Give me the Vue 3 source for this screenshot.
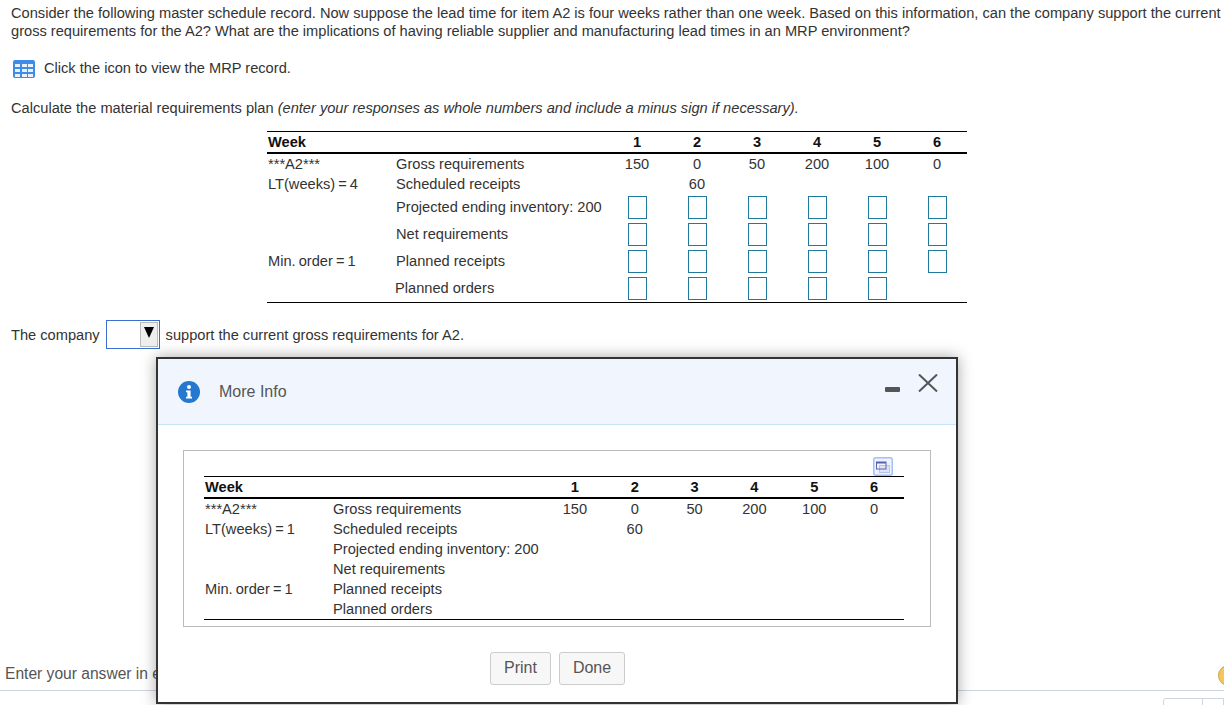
<template>
  <div class="page">
    <div class="content">
      <p class="question">
        Consider the following master schedule record. Now suppose the lead time for item A2 is four weeks rather than one week. Based on this information, can the company support the current gross requirements for the A2? What are the implications of having reliable supplier and manufacturing lead times in an MRP environment?
      </p>

      <div class="icon-line">
        <svg class="grid-icon" width="22" height="18" viewBox="0 0 22 18">
          <rect width="22" height="18" rx="2" fill="#3f8be8" />
          <g fill="#e8f1fc">
            <template v-for="y in [4, 9, 14]" :key="y">
              <rect v-for="x in [2, 9, 15]" :key="x" :x="x" :y="y" width="5" height="3" />
            </template>
          </g>
        </svg>
        <span class="icon-text">Click the icon to view the MRP record.</span>
      </div>

      <p class="calc">
        Calculate the material requirements plan <em>(enter your responses as whole numbers and include a minus sign if necessary).</em>
      </p>

      <table class="mrp answer">
        <thead>
          <tr>
            <th class="c1">Week</th>
            <th class="c2"></th>
            <th v-for="w in weeks" :key="w" class="num">{{ w }}</th>
          </tr>
        </thead>
        <tbody>
          <tr v-for="row in answerRows" :key="row.label" :class="{ inputs: row.inputs }">
            <td class="side">{{ row.side }}</td>
            <td :class="{ nudge: row.label === 'Planned orders' }">{{ row.label }}</td>
            <td v-for="(w, i) in weeks" :key="w" class="num">
              <template v-if="row.values">{{ row.values[i] }}</template>
              <input v-else-if="i < row.inputs" class="cell" type="text" />
            </td>
          </tr>
        </tbody>
      </table>

      <div class="company">
        <span>The company</span>
        <div class="dropdown">
          <span class="arrow-btn"><i class="arrow"></i></span>
        </div>
        <span>support the current gross requirements for A2.</span>
      </div>
    </div>

    <div class="footer">
      <span class="hint">Enter your answer in each of the edit fields.</span>
      <div class="coin"></div>
    </div>
    <div class="footer-tabs"></div>

    <div class="modal">
      <div class="modal-head">
        <svg class="info" width="22" height="22" viewBox="0 0 22 22">
          <circle cx="11" cy="11" r="11" fill="#2478cf" />
          <circle cx="11" cy="6" r="2" fill="#fff" />
          <path d="M8 9.5h4.6v6.2H14V17.500H8v-1.800h1.400v-4.400H8z" fill="#fff" />
        </svg>
        <span class="modal-title">More Info</span>
        <svg class="minus" width="15" height="5" viewBox="0 0 15 5">
          <rect width="15" height="5" rx="1" fill="#555" />
        </svg>
        <svg class="close" width="20" height="18" viewBox="0 0 20 18">
          <path d="M1 0.500L19 17.500M19 0.500L1 17.500" stroke="#555" stroke-width="2" fill="none" />
        </svg>
      </div>

      <div class="modal-body">
        <div class="panel">
          <svg class="expand" width="20" height="19" viewBox="0 0 20 19">
            <rect x="0.750" y="0.750" width="18.500" height="17.500" rx="2" fill="#eef3ff" stroke="#a3c0fb" stroke-width="1.500" />
            <rect x="6.500" y="8.500" width="10" height="7" fill="#dfe4f4" stroke="#bcc4e4" />
            <rect x="3.500" y="5" width="9.500" height="7" fill="none" stroke="#5a62b0" />
            <rect x="3.500" y="5" width="9.500" height="1.500" fill="#5a62b0" />
          </svg>
          <table class="mrp info-table">
            <thead>
              <tr>
                <th class="c1">Week</th>
                <th class="c2"></th>
                <th v-for="w in weeks" :key="w" class="num">{{ w }}</th>
              </tr>
            </thead>
            <tbody>
              <tr v-for="row in infoRows" :key="row.label">
                <td class="side">{{ row.side }}</td>
                <td>{{ row.label }}</td>
                <td v-for="(w, i) in weeks" :key="w" class="num">{{ row.values ? row.values[i] : '' }}</td>
              </tr>
            </tbody>
          </table>
        </div>
        <div class="modal-actions">
          <button type="button">Print</button>
          <button type="button">Done</button>
        </div>
      </div>
    </div>
  </div>
</template>

<script setup>
const weeks = [1, 2, 3, 4, 5, 6]

const gross = [150, 0, 50, 200, 100, 0]
const sched = ['', 60, '', '', '', '']

const answerRows = [
  { side: '***A2***', label: 'Gross requirements', values: gross },
  { side: 'LT(weeks) = 4', label: 'Scheduled receipts', values: sched },
  { side: '', label: 'Projected ending inventory: 200', inputs: 6 },
  { side: '', label: 'Net requirements', inputs: 6 },
  { side: 'Min. order = 1', label: 'Planned receipts', inputs: 6 },
  { side: '', label: 'Planned orders', inputs: 5 }
]

const infoRows = [
  { side: '***A2***', label: 'Gross requirements', values: gross },
  { side: 'LT(weeks) = 1', label: 'Scheduled receipts', values: sched },
  { side: '', label: 'Projected ending inventory: 200' },
  { side: '', label: 'Net requirements' },
  { side: 'Min. order = 1', label: 'Planned receipts' },
  { side: '', label: 'Planned orders' }
]
</script>

<style>
html,
body {
  margin: 0;
  background: #fff;
  overflow: hidden;
}
</style>

<style scoped>
.page {
  position: relative;
  width: 1224px;
  height: 705px;
  overflow: hidden;
  display: flex;
  flex-direction: column;
  font-family: "Liberation Sans", Arial, sans-serif;
  font-size: 14.63px;
  color: #333;
  background: #fff;
}

.content {
  padding: 4px 0 0 11px;
  flex: 1;
}

.question {
  margin: 0;
  width: 1213px;
  line-height: 18px;
}

.icon-line {
  display: flex;
  align-items: center;
  gap: 9px;
  margin: 20px 0 0 2px;
  height: 18px;
}

.icon-text {
  position: relative;
  top: -1px;
}

.calc {
  margin: 21px 0 0;
  line-height: 18px;
}

.mrp {
  border-collapse: collapse;
  table-layout: fixed;
  width: 700px;
  border-top: 1px solid #000;
  border-bottom: 1px solid #000;
}

.mrp th {
  height: 20px;
  padding: 0 0 0 1px;
  text-align: left;
  font-weight: 700;
  color: #111;
  border-bottom: 2px solid #000;
}

.mrp td {
  height: 20px;
  padding: 0 0 0 1px;
}

.mrp .c1 {
  width: 127px;
}

.mrp .c2 {
  width: 211px;
}

.mrp .num {
  width: 60px;
  padding: 0;
  text-align: center;
}

.mrp .side {
  word-spacing: -1px;
}

.info-table .c2 {
  width: 212px;
}

.info-table .num {
  width: 59.83px;
}

.answer {
  margin: 14px 0 0 256px;
}

.answer tr.inputs td {
  height: 27px;
}

.answer tr.inputs td:not(.num) {
  box-sizing: border-box;
  padding-bottom: 2px;
}

.nudge {
  position: relative;
  left: -1px;
}

.cell {
  display: block;
  box-sizing: border-box;
  width: 19px;
  height: 23px;
  margin: 0 auto;
  padding: 0;
  border: 1px solid #1f7a9e;
  background: #fff;
}

.company {
  display: flex;
  align-items: center;
  gap: 6px;
  margin-top: 17px;
  height: 29px;
}

.dropdown {
  box-sizing: border-box;
  width: 54px;
  height: 29px;
  border: 1px solid #3a6fd0;
  display: flex;
  justify-content: flex-end;
  align-items: center;
  padding-right: 1px;
  background: #fff;
}

.arrow-btn {
  box-sizing: border-box;
  width: 18px;
  height: 25px;
  margin-bottom: 1px;
  display: flex;
  justify-content: center;
  padding-top: 4px;
  background: #eee;
  border: 1px solid #bbb;
}

.arrow {
  width: 0;
  height: 0;
  border-left: 5px solid transparent;
  border-right: 5px solid transparent;
  border-top: 11px solid #000;
}

.footer {
  box-sizing: border-box;
  height: 37px;
  display: flex;
  justify-content: space-between;
  padding: 11px 0 0 5px;
  border-bottom: 1px solid #cfd5dc;
  margin-bottom: 14px;
}

.hint {
  font-size: 15.6px;
  color: #555;
  line-height: 18px;
}

.coin {
  flex: none;
  width: 21px;
  height: 21px;
  margin-right: -15px;
  border-radius: 50%;
  background: #f6c659;
  border: 1px solid #c9a24a;
  box-sizing: border-box;
}

.footer-tabs {
  position: absolute;
  left: 1163px;
  top: 698px;
  width: 61px;
  height: 10px;
  box-sizing: border-box;
  border: 1px solid #cfd5dc;
  border-radius: 3px 0 0 0;
  background: linear-gradient(to right, transparent 38px, #cfd5dc 38px, #cfd5dc 39px, transparent 39px);
}

/* dialog floats over the page */
.modal {
  position: absolute;
  left: 156px;
  top: 357px;
  width: 802px;
  height: 347px;
  box-sizing: border-box;
  border: 2px solid #333;
  background: #fff;
  box-shadow: 0 0 14px rgba(0, 0, 0, 0.35);
  display: flex;
  flex-direction: column;
}

.modal-head {
  box-sizing: border-box;
  height: 66px;
  flex: none;
  display: flex;
  align-items: center;
  padding-left: 20px;
  background: #f1f6fe;
  border-bottom: 1px solid #c5e3f9;
  position: relative;
}

.modal-title {
  margin-left: 19px;
  font-size: 16px;
  color: #555;
}

.minus {
  position: absolute;
  left: 727px;
  top: 28px;
}

.close {
  position: absolute;
  left: 760px;
  top: 15px;
}

.modal-body {
  flex: 1;
  padding: 25px 25px 0;
}

.panel {
  position: relative;
  box-sizing: border-box;
  width: 748px;
  height: 177px;
  border: 1px solid #bbb;
  padding: 25px 0 0 20px;
}

.expand {
  position: absolute;
  left: 689px;
  top: 6px;
}

.modal-actions {
  display: flex;
  gap: 8px;
  margin: 25px 0 0 307px;
}

.modal-actions button {
  box-sizing: border-box;
  height: 33px;
  padding: 0 13px 2px;
  font-family: inherit;
  font-size: 16px;
  color: #555;
  background: #f7f7f7;
  border: 1px solid #ccc;
  border-radius: 3px;
}
</style>
